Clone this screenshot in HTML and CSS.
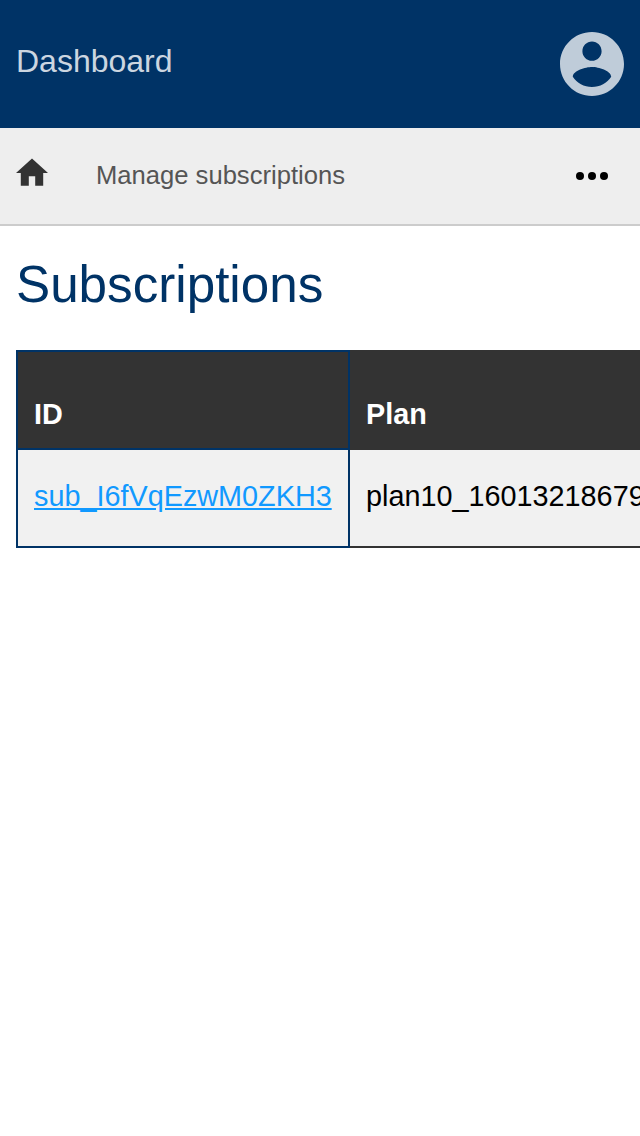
FILE: index.html
```html
<!DOCTYPE html>
<html lang="en">
<head>
<meta charset="utf-8">
<title>Subscriptions</title>
<link rel="stylesheet" href="styles.css">
</head>
<body>
<header class="header">
  <a class="brand">Dashboard</a>
  <svg class="account" viewBox="2 2 20 20"><path d="M12 2C6.480 2 2 6.480 2 12s4.480 10 10 10 10-4.480 10-10S17.520 2 12 2zm0 3c1.660 0 3 1.340 3 3s-1.340 3-3 3-3-1.340-3-3 1.340-3 3-3zm0 14.200c-2.500 0-4.710-1.280-6-3.220.030-1.990 4-3.080 6-3.080 1.990 0 5.970 1.090 6 3.080-1.290 1.940-3.500 3.220-6 3.220z"/></svg>
</header>
<nav class="nav">
  <svg class="home" viewBox="2 2 20 20"><path d="M10 20v-6h4v6h5v-8h3L12 3 2 12h3v8z"/></svg>
  <span class="crumb">Manage subscriptions</span>
  <svg class="more" viewBox="0 0 32 8"><circle cx="4" cy="4" r="4"/><circle cx="16" cy="4" r="4"/><circle cx="28" cy="4" r="4"/></svg>
</nav>
<main class="content">
  <h1 class="title">Subscriptions</h1>
  <table class="table">
    <thead><tr><th class="id-cell">ID</th><th>Plan</th></tr></thead>
    <tbody><tr><td class="id-cell"><a class="link">sub_I6fVqEzwM0ZKH3</a></td><td>plan10_16013218679</td></tr></tbody>
  </table>
</main>
</body>
</html>
```
FILE: styles.css
```css
* { box-sizing: border-box; }
body { margin: 0; background: #fff; color: #000; font-family: "Liberation Sans", Arial, sans-serif; overflow: hidden; }
.header { height: 128px; padding: 0 16px; display: flex; align-items: center; justify-content: space-between; background: #003366; }
.brand { font-size: 32px; line-height: 36px; padding-bottom: 6px; color: #ccd6e0; }
.account { width: 64px; height: 64px; fill: #bfccd9; }
.nav { height: 98px; padding: 0 32px 0 16px; display: flex; align-items: center; background: #eee; border-bottom: 2px solid #ccc; }
.home { width: 32px; height: 32px; margin-bottom: 6.4px; fill: #333; }
.crumb { margin-left: 48px; padding-bottom: 2px; font-size: 25.6px; line-height: 30px; color: #555; }
.more { width: 32px; height: 8px; margin-left: auto; }
.content { padding: 29px 0 0 16px; overflow: hidden; }
.title { margin: 0 0 35px; font-size: 51.2px; line-height: 60px; font-weight: 400; color: #003366; }
.table { width: 720px; border-collapse: separate; border-spacing: 0; table-layout: fixed; font-size: 28.8px; line-height: 34px; text-align: left; white-space: nowrap; }
.table th { height: 100px; padding: 28px 16px 0; background: #333; color: #fff; border-top: 2px solid #333; border-bottom: 2px solid #333; }
.table td { height: 98px; padding: 0 16px 4px; background: #f1f1f1; border-bottom: 2px solid #333; }
.table .id-cell { width: 334px; border-left: 2px solid #003366; border-right: 2px solid #003366; border-bottom-color: #003366; }
.table th.id-cell { border-top-color: #003366; }
.link { color: #1199ff; text-decoration: underline; }
```
